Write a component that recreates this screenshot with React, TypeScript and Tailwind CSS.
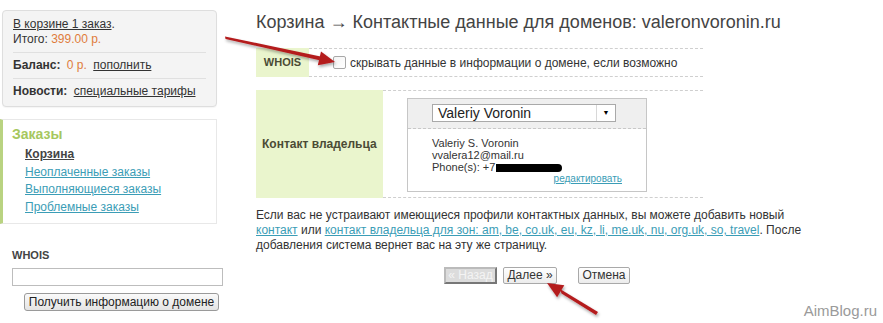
export default function App() {
  return (
    <div className="relative h-[323px] w-[883px] overflow-hidden bg-white font-['Liberation_Sans',Arial,sans-serif] text-[12px] text-[#333]">
      <div className="flex">
        {/* left column */}
        <aside className="w-[226px] shrink-0">
          <div className="ml-[2px] mt-[10px] w-[215px] rounded-[4px] border border-[#dedede] bg-[#f4f4f4] px-[10px] leading-[15px] shadow-[0_1px_1px_rgba(0,0,0,0.04)]">
            <div className="border-b border-[#e0e0e0] pb-[5px] pt-[6px]">
              <div>
                <a className="text-[#333] underline">В корзине 1 заказ</a>.
              </div>
              <div>
                Итого: <span className="text-[#e07c3c]">399.00 р.</span>
              </div>
            </div>
            <div className="border-b border-[#e0e0e0] py-[5px]">
              <b>Баланс:</b> <span className="ml-[3px] text-[#e07c3c]">0 р.</span>{" "}
              <a className="ml-[3px] underline">пополнить</a>
            </div>
            <div className="pb-[7px] pt-[5px]">
              <b>Новости:</b> <a className="ml-[3px] underline">специальные тарифы</a>
            </div>
          </div>

          <div className="mt-[12px] w-[217px] border border-l-[3px] border-[#e8e8e8] border-l-[#b9d381] px-[9px] pb-[7px] pt-[6px]">
            <div className="text-[14px] font-bold leading-[16px] text-[#a6c760]">Заказы</div>
            <ul className="ml-[13px] mt-[4px] leading-[17.5px]">
              <li>
                <a className="font-bold text-[#444] underline">Корзина</a>
              </li>
              <li>
                <a className="text-[#3b9db6] underline">Неоплаченные заказы</a>
              </li>
              <li>
                <a className="text-[#3b9db6] underline">Выполняющиеся заказы</a>
              </li>
              <li>
                <a className="text-[#3b9db6] underline">Проблемные заказы</a>
              </li>
            </ul>
          </div>

          <div className="ml-[12px] mt-[24px] text-[11px] font-bold leading-[14px] text-[#444]">WHOIS</div>
          <input className="ml-[12px] mt-[6px] block h-[18px] w-[211px] border border-[#bdbdbd] bg-white" />
          <button className="ml-[24px] mt-[7px] block h-[18px] w-[195px] rounded-[3px] border border-[#9a9a9a] bg-gradient-to-b from-[#fafafa] to-[#e4e4e4] text-[12px] leading-[16px] text-[#222]">
            Получить информацию о домене
          </button>
        </aside>

        {/* main column */}
        <main className="ml-[30px] flex-1">
          <h1 className="mt-[11px] text-[18px] leading-[22px] text-[#444]">
            Корзина → Контактные данные для доменов: valeronvoronin.ru
          </h1>

          <div className="mt-[15px] w-[447px]">
            <div className="flex h-[29px]">
              <div className="flex w-[53px] items-center justify-center bg-[#eaf5cd] text-[11px] font-bold text-[#4b4b35]">
                WHOIS
              </div>
              <div className="flex flex-1 items-center border-y border-dashed border-[#cfcfcf] pl-[24px]">
                <span className="h-[13px] w-[13px] rounded-[2px] border border-[#a8a8a8] bg-gradient-to-br from-[#f4f4f4] to-white" />
                <span className="ml-[4px]">скрывать данные в информации о домене, если возможно</span>
              </div>
            </div>

            <div className="mt-[13px] flex h-[108px]">
              <div className="flex w-[127px] items-center bg-[#eaf5cd] pl-[6px] font-bold text-[#4b4b35]">
                Контакт владельца
              </div>
              <div className="flex-1 border-y border-dashed border-[#cfcfcf] pl-[24px] pt-[7px]">
                <div className="h-[94px] w-[240px] border border-[#c6c6c6]">
                  <div className="h-[30px] border-b border-dashed border-[#c8c8c8] bg-[#efefef] pl-[24px] pt-[5px]">
                    <div className="flex h-[18px] w-[184px] border border-[#a9a9a9] bg-white">
                      <span className="flex-1 pl-[5px] text-[14px] leading-[16px] text-[#222]">Valeriy Voronin</span>
                      <span className="flex w-[19px] items-center justify-center border-l border-[#d8d8d8] text-[7px] text-black">
                        ▼
                      </span>
                    </div>
                  </div>
                  <div className="pl-[24px] pr-[24px] pt-[8px] text-[11px] leading-[12px] text-[#333]">
                    <div>Valeriy S. Voronin</div>
                    <div>vvalera12@mail.ru</div>
                    <div className="whitespace-nowrap">
                      Phone(s): +7
                      <span className="ml-[1px] inline-block h-[8px] w-[66px] rounded-l-[4px] rounded-r-full bg-black align-[-1px]" />
                    </div>
                    <div className="text-right text-[10px] leading-[12px]">
                      <a className="text-[#3b9db6] underline">редактировать</a>
                    </div>
                  </div>
                </div>
              </div>
            </div>
          </div>

          <p className="mt-[10px] leading-[15px] text-[#333]">
            Если вас не устраивают имеющиеся профили контактных данных, вы можете добавить новый
            <br />
            <a className="text-[#3b9db6] underline">контакт</a> или{" "}
            <a className="text-[#3b9db6] underline">
              контакт владельца для зон: am, be, co.uk, eu, kz, li, me.uk, nu, org.uk, so, travel
            </a>
            . После
            <br />
            добавления система вернет вас на эту же страницу.
          </p>

          <div className="ml-[188px] mt-[14px] flex items-center">
            <button className="h-[17px] w-[53px] border-[2px] border-[#bbb] border-r-[#777] border-b-[#777] bg-[#dcdcdc] text-[12px] leading-[13px] text-[#f4f4f4]">
              « Назад
            </button>
            <button className="ml-[6px] h-[17px] w-[54px] rounded-[2px] border border-[#a9a9a9] bg-gradient-to-b from-white to-[#ececec] text-[12px] leading-[15px] text-[#333]">
              Далее »
            </button>
            <button className="ml-[21px] h-[17px] w-[52px] rounded-[2px] border border-[#a9a9a9] bg-gradient-to-b from-white to-[#ececec] text-[12px] leading-[15px] text-[#333]">
              Отмена
            </button>
          </div>
        </main>
      </div>

      <div className="absolute bottom-[3px] right-[6px] text-[15px] leading-[18px] text-[#9a9a9a]">AimBlog.ru</div>

      {/* red annotation arrows */}
      <svg className="pointer-events-none absolute left-0 top-0" width="883" height="323" viewBox="0 0 883 323">
        <defs>
          <filter id="sh" x="-20%" y="-50%" width="140%" height="200%">
            <feDropShadow dx="1" dy="2" stdDeviation="1.5" floodColor="#000" floodOpacity="0.35" />
          </filter>
        </defs>
        <g fill="#b41b1f" filter="url(#sh)">
          <polygon points="225,36.5 225.5,39 319.5,60.3 320.5,56.5" />
          <polygon points="335,62 317.8,65.2 321,51.6" />
          <polygon points="598,312 596,315 561.5,293.5 560,289" />
          <polygon points="547,283 564.3,285.2 557.1,297.2" />
        </g>
      </svg>
    </div>
  );
}
